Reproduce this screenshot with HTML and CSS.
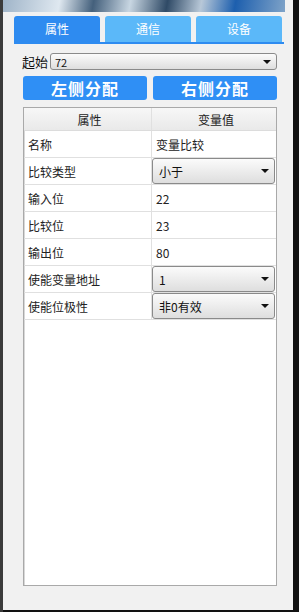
FILE: index.html
```html
<!DOCTYPE html>
<html lang="zh-CN">
<head>
    <meta charset="UTF-8">
    <meta name="viewport" content="width=device-width, initial-scale=1.0">
    <title>属性</title>
    <link rel="stylesheet" href="styles.css">
</head>
<body>
    <div class="edge-left"></div>
    <div class="frame">
        <div class="banner"></div>

        <!-- Tabs -->
        <div class="tabs">
            <div class="tab active">属性</div>
            <div class="tab">通信</div>
            <div class="tab">设备</div>
        </div>

        <div class="content">
            <div class="start-row">
                <span class="start-label">起始</span>
                <div class="select small">72<span class="caret"></span></div>
            </div>

            <div class="actions">
                <button class="btn">左侧分配</button>
                <button class="btn">右侧分配</button>
            </div>

            <!-- Property grid -->
            <div class="grid">
                <div class="grid-head">
                    <div class="cell">属性</div>
                    <div class="cell">变量值</div>
                </div>
                <div class="grid-row">
                    <div class="cell">名称</div>
                    <div class="cell">变量比较</div>
                </div>
                <div class="grid-row">
                    <div class="cell">比较类型</div>
                    <div class="cell"><div class="select">小于<span class="caret"></span></div></div>
                </div>
                <div class="grid-row">
                    <div class="cell">输入位</div>
                    <div class="cell">22</div>
                </div>
                <div class="grid-row">
                    <div class="cell">比较位</div>
                    <div class="cell">23</div>
                </div>
                <div class="grid-row">
                    <div class="cell">输出位</div>
                    <div class="cell">80</div>
                </div>
                <div class="grid-row">
                    <div class="cell">使能变量地址</div>
                    <div class="cell"><div class="select">1<span class="caret"></span></div></div>
                </div>
                <div class="grid-row">
                    <div class="cell">使能位极性</div>
                    <div class="cell"><div class="select">非0有效<span class="caret"></span></div></div>
                </div>
                <div class="grid-fill"></div>
            </div>
        </div>
    </div>
</body>
</html>
```

FILE: styles.css
```css
body {
    margin: 0;
    width: 299px;
    height: 612px;
    display: flex;
    align-items: flex-start;
    background-color: #121212;
    font-family: "Noto Sans CJK SC", "Noto Sans", sans-serif;
    font-size: 12px;
    color: #222;
    overflow: hidden;
}

.edge-left {
    width: 3px;
    height: 612px;
    background-color: #3b3b3b;
}

.frame {
    width: 290px;
    height: 610px;
    background-color: #f1f1f1;
    display: flex;
    flex-direction: column;
}

.banner {
    height: 12px;
    margin-right: 8px;
    background: linear-gradient(100deg, #9fb4c8 0%, #dfe8f0 20%, #44607c 32%, #c8d6e2 45%, #2f4a66 58%, #b8c8d8 70%, #1d5fae 82%, #7fa3c8 100%);
}

.tabs {
    display: flex;
    gap: 5px;
    margin: 4px 9px 0 11px;
    border-bottom: 2px solid #2e8bf0;
}

.tab {
    width: 86px;
    height: 26px;
    line-height: 26px;
    text-align: center;
    color: #fff;
    background-color: #5bb8f9;
    border-radius: 3px 3px 0 0;
}

.tab.active {
    background-color: #2e8bf0;
}

.content {
    flex: 1;
    display: flex;
    flex-direction: column;
    padding: 9px 16px 24px 19px;
}

.start-row {
    display: flex;
    align-items: center;
    gap: 2px;
    height: 17px;
}

.start-label {
    width: 26px;
    font-size: 13px;
    color: #111;
}

.select {
    position: relative;
    flex: 1;
    height: 100%;
    box-sizing: border-box;
    padding-left: 6px;
    display: flex;
    align-items: center;
    border: 1px solid #8a8a8a;
    border-radius: 3px;
    background: linear-gradient(#fbfbfb, #dedede);
    color: #111;
}

.select.small {
    font-size: 11px;
    padding-left: 4px;
}

.caret {
    position: absolute;
    right: 5px;
    top: 50%;
    margin-top: -2px;
    border-left: 4px solid transparent;
    border-right: 4px solid transparent;
    border-top: 4px solid #111;
}

.actions {
    display: flex;
    gap: 6px;
    margin-top: 6px;
    margin-left: 1px;
}

.btn {
    flex: 1;
    height: 24px;
    padding: 0;
    border: none;
    border-radius: 3px;
    background-color: #2f8ff5;
    color: #fff;
    font-family: "Noto Sans CJK SC", sans-serif;
    font-size: 16px;
    font-weight: bold;
    letter-spacing: 1px;
}

.grid {
    flex: 1;
    margin-top: 7px;
    margin-left: 1px;
    display: flex;
    flex-direction: column;
    background-color: #fff;
    border: 1px solid #a9a9a9;
    box-shadow: inset 1px 1px 0 #d8d8d8;
}

.grid-head, .grid-row {
    display: flex;
}

.grid-head {
    height: 22px;
    background: linear-gradient(#f7f7f7, #e9e9e9);
    border-bottom: 1px solid #dcdcdc;
}

.grid-head .cell {
    justify-content: center;
}

.grid-row {
    height: 26px;
    border-bottom: 1px solid #e0e0e0;
}

.cell {
    display: flex;
    align-items: center;
    box-sizing: border-box;
    padding-left: 4px;
}

.cell:first-child {
    width: 128px;
    border-right: 1px solid #e0e0e0;
}

.cell:last-child {
    flex: 1;
    padding-left: 4px;
}

.grid-row .cell:last-child:has(.select) {
    padding: 0 1px 0 0;
}

.grid-row .select {
    height: 26px;
}

.grid-fill {
    flex: 1;
}
```
